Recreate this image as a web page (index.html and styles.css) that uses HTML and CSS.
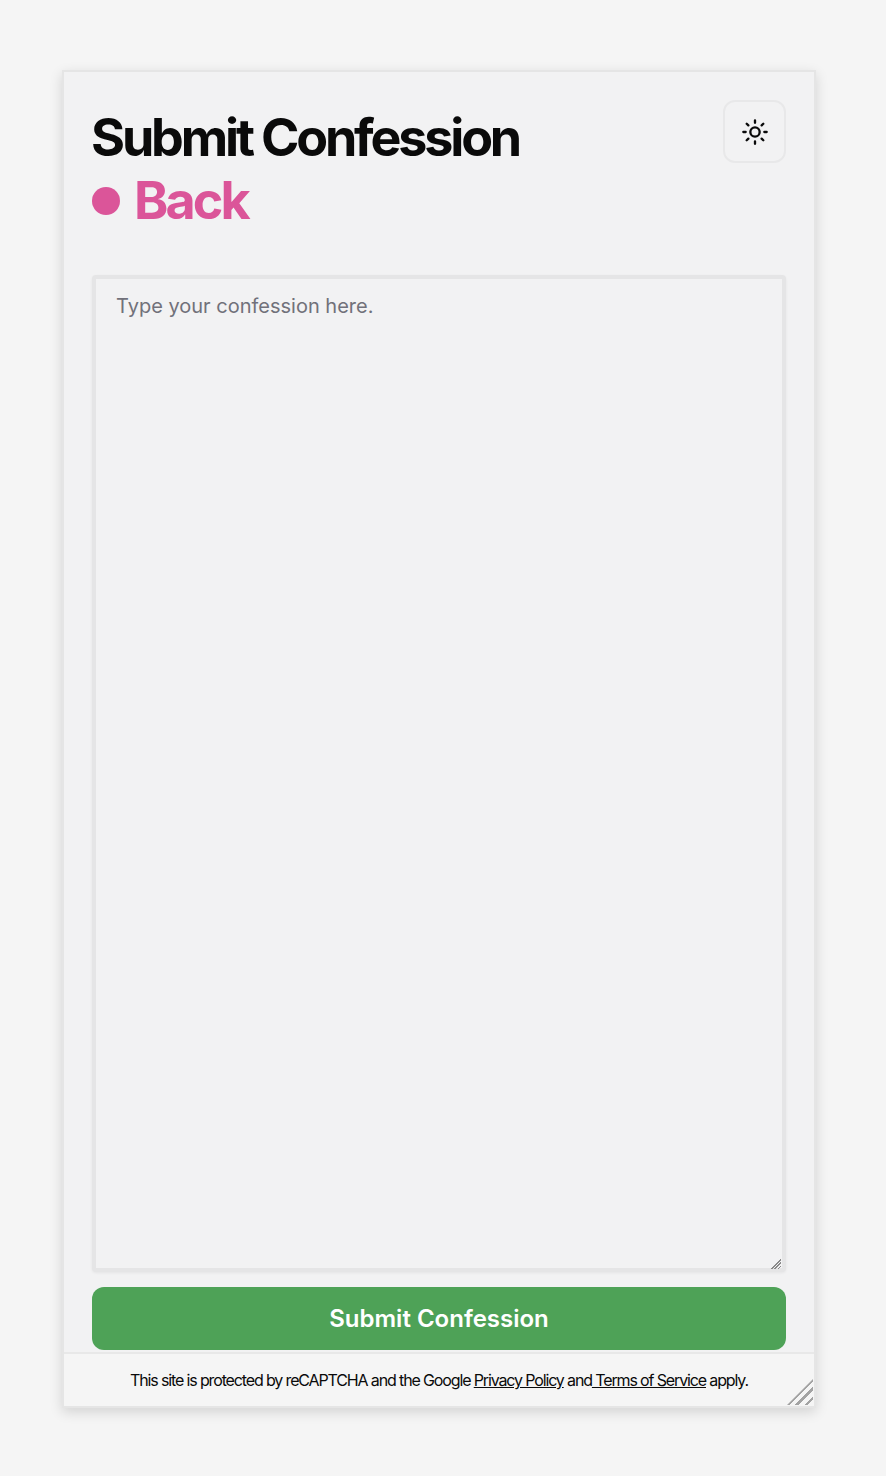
FILE: index.html
```html
<!DOCTYPE html>
<html lang="en">
<head>
  <meta charset="UTF-8">
  <meta name="viewport" content="width=device-width, initial-scale=1">
  <title>Submit Confession</title>
  <link rel="stylesheet" href="styles.css">
</head>
<body>
  <div class="card">
    <main class="card-main">
      <header class="card-header">
        <div class="titles">
          <h1>Submit Confession</h1>
          <a class="back-link" href="#"><span class="back-dot"></span>Back</a>
        </div>
        <button class="theme-btn" type="button" aria-label="Toggle theme">
          <svg width="28" height="28" viewBox="0 0 24 24" fill="none" stroke="currentColor" stroke-width="2" stroke-linecap="round">
            <circle cx="12" cy="12" r="4"></circle>
            <path d="M12 2v2M12 20v2M4.9 4.9l1.4 1.4M17.7 17.7l1.4 1.4M2 12h2M20 12h2M6.3 17.7l-1.4 1.4M19.1 4.9l-1.4 1.4"></path>
          </svg>
        </button>
      </header>
      <form class="confession-form">
        <div class="input-wrap">
          <textarea class="confession-input" placeholder="Type your confession here."></textarea>
          <span class="input-grip"></span>
        </div>
        <button class="submit-btn" type="submit">Submit Confession</button>
      </form>
    </main>
    <footer class="card-footer">
      <p>This site is protected by reCAPTCHA and the Google <a href="#">Privacy Policy</a> and<a href="#"> Terms of Service</a> apply.</p>
      <span class="card-resizer"></span>
    </footer>
  </div>
</body>
</html>
```

FILE: styles.css
```css
* {
  margin: 0;
  padding: 0;
  box-sizing: border-box;
  font-family: Inter, "Liberation Sans", sans-serif;
}
body {
  background: #f5f5f5;
  padding: 70px 70px 68px 62px;
}
.card {
  position: relative;
  height: 1338px;
  display: flex;
  flex-direction: column;
  background: #f2f2f3;
  border: 2px solid #e5e5e5;
  box-shadow: 0 4px 12px rgba(0, 0, 0, 0.14);
}
.card-main {
  flex: 1;
  padding: 28px 28px 2px;
  display: flex;
  flex-direction: column;
}
.card-header {
  display: flex;
  justify-content: space-between;
  align-items: flex-start;
  height: 175px;
  flex: none;
}
.titles {
  padding-top: 6px;
}
h1 {
  margin-left: -1px;
  font-size: 52px;
  line-height: 63px;
  font-weight: 700;
  letter-spacing: -0.061em;
  color: #0a0a0a;
}
.back-link {
  display: flex;
  align-items: center;
  gap: 14px;
  font-size: 52px;
  line-height: 64px;
  font-weight: 700;
  letter-spacing: -0.055em;
  color: #db5599;
  text-decoration: none;
}
.back-dot {
  width: 28px;
  height: 28px;
  border-radius: 50%;
  background: #db5599;
}
.theme-btn {
  width: 63px;
  height: 63px;
  display: flex;
  align-items: center;
  justify-content: center;
  background: #f2f2f3;
  border: 2px solid #e8e8e9;
  border-radius: 12px;
  color: #0a0a0a;
}
.confession-form {
  flex: 1;
  display: flex;
  flex-direction: column;
  gap: 15px;
}
.input-wrap {
  flex: 1;
  position: relative;
}
.confession-input {
  display: block;
  width: 100%;
  height: 100%;
  padding: 13px 20px;
  background: #f2f2f3;
  border: 4px solid #e5e5e6;
  border-radius: 4px;
  box-shadow: 0 1px 3px rgba(0, 0, 0, 0.06);
  font-size: 20px;
  line-height: 28px;
  color: #0a0a0a;
  outline: none;
  resize: none;
}
.confession-input::placeholder {
  color: #71717a;
  opacity: 1;
}
.input-grip {
  position: absolute;
  right: 5px;
  bottom: 3px;
  width: 11px;
  height: 11px;
  background: repeating-linear-gradient(135deg, transparent 0, transparent 1px, #8a8a8a 1px, #8a8a8a 2px, transparent 2px, transparent 2.4px);
  clip-path: polygon(100% 0, 100% 100%, 0 100%);
}
.submit-btn {
  height: 63px;
  flex: none;
  background: #4ea257;
  border: none;
  border-radius: 12px;
  color: #fff;
  font-size: 24px;
  font-weight: 600;
  cursor: pointer;
}
.card-footer {
  flex: none;
  position: relative;
  height: 54px;
  display: flex;
  align-items: center;
  justify-content: center;
  background: #f5f5f5;
  border-top: 2px solid #e8e8e8;
}
.card-footer p {
  font-size: 16px;
  letter-spacing: -0.071em;
  color: #0a0a0a;
}
.card-footer a {
  color: #0a0a0a;
  text-decoration: underline;
}
.card-resizer {
  position: absolute;
  right: 1px;
  bottom: 1px;
  width: 26px;
  height: 26px;
  background: repeating-linear-gradient(135deg, transparent 0, transparent 4.2px, #a3a3a3 4.2px, #a3a3a3 6.6px);
  clip-path: polygon(100% 0, 100% 100%, 0 100%);
}
```
